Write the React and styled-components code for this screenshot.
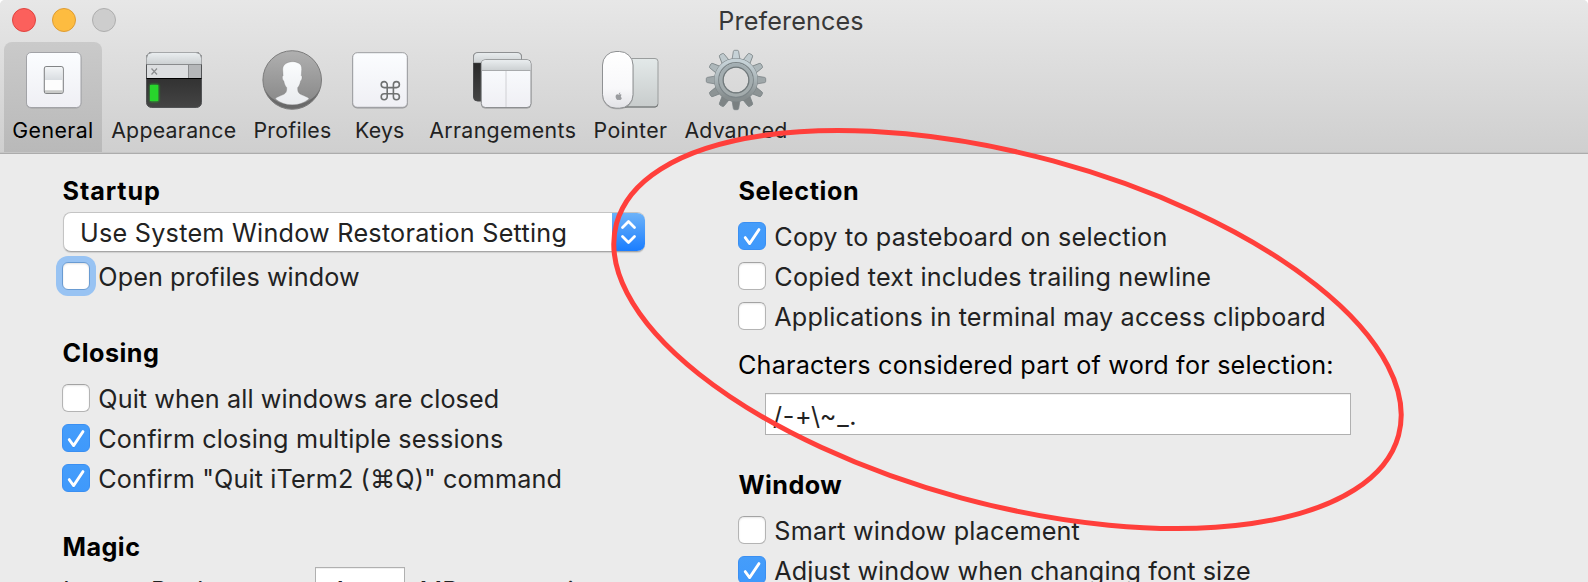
import React from 'react';
import styled, { createGlobalStyle, css } from 'styled-components';
import { FaApple } from 'react-icons/fa';

const GlobalStyle = createGlobalStyle`
  * { box-sizing: border-box; }
  body { margin: 0; background: #fff; font-family: Inter, "Liberation Sans", sans-serif; }
`;

const Window = styled.main`
  position: relative;
  display: flex;
  flex-direction: column;
  width: 1588px;
  height: 582px;
  overflow: hidden;
  background: #ebebeb;
  border-radius: 5px 5px 0 0;
  color: #222;
  font-size: 25.2px;
  line-height: 28px;
  white-space: nowrap;
`;

const Header = styled.header`
  flex: none;
  height: 154px;
  background: linear-gradient(#e7e7e7, #cfcfcf);
  border-bottom: 1px solid #acacac;
  box-shadow: inset 0 -1px #c6c6c6;
`;

const TitleBar = styled.div`
  display: grid;
  grid-template-columns: 200px 1fr 200px;
  height: 42px;
  padding: 0 6px 0 0;
`;

const Lights = styled.div`
  display: flex;
  gap: 16px;
  padding: 8px 0 0 12px;
`;

const Light = styled.span`
  width: 24px;
  height: 24px;
  border-radius: 50%;
  background: ${(p) => p.$fill};
  border: 1px solid ${(p) => p.$edge};
`;

const Title = styled.h1`
  margin: 0;
  padding-top: 7px;
  font-size: inherit;
  font-weight: 400;
  text-align: center;
  color: #383838;
  letter-spacing: 0.12px;
`;

const Toolbar = styled.nav`
  display: flex;
  height: 110px;
  padding-left: 4px;
`;

const Tab = styled.div`
  display: flex;
  flex-direction: column;
  align-items: center;
  width: ${(p) => p.$width}px;
  padding-top: 6px;
  font-size: 21.3px;
  line-height: 26px;
  letter-spacing: ${(p) => p.$track}px;
  ${(p) =>
    p.$active &&
    css`
      color: #000;
      background: linear-gradient(#cacaca, #b9b9b9);
      border-radius: 8px 8px 0 0;
    `}
  > svg {
    flex: none;
    margin-bottom: 5px;
  }
`;

const Panes = styled.div`
  display: grid;
  grid-template-columns: 676px 1fr;
  padding: 23px 0 0 62px;
`;

const Column = styled.div`
  display: flex;
  flex-direction: column;
`;

const Section = styled.section`
  display: flex;
  flex-direction: column;
  margin-bottom: ${(p) => p.$after || 0}px;
`;

const Heading = styled.h2`
  margin: 0 0 ${(p) => p.$after ?? 17}px;
  padding-left: 0.5px;
  font-size: inherit;
  font-weight: 700;
  color: #000;
  letter-spacing: ${(p) => p.$track}px;
`;

const Rows = styled.div`
  display: flex;
  flex-direction: column;
  gap: 12px;
`;

const CheckRow = styled.label`
  display: flex;
  gap: 8.3px;
  height: 28px;
  line-height: 30px;
  letter-spacing: ${(p) => p.$track}px;
`;

const Box = styled.span`
  flex: none;
  width: 28px;
  height: 28px;
  border-radius: 6px;
  ${(p) =>
    p.$on
      ? css`
          background: linear-gradient(#459dfa, #3f99fc);
          border: 1px solid #3a8ff2;
        `
      : css`
          background: #fff;
          border: 1px solid #b4b4b4;
          border-top-color: #a3a3a3;
          box-shadow: inset 0 1px 2px rgba(0, 0, 0, 0.1);
        `}
  ${(p) =>
    p.$focused &&
    css`
      border-color: #699bd2;
      box-shadow: 0 0 0 6px #98c3f3, inset 0 1px 2px rgba(0, 0, 0, 0.12);
    `}
  svg {
    display: block;
  }
`;

const Select = styled.div`
  display: flex;
  justify-content: space-between;
  width: 582px;
  height: 40px;
  margin: 0 0 10px 1px;
  padding-left: 16px;
  overflow: hidden;
  background: #fff;
  border-radius: 8px;
  border: 1px solid #c4c4c4;
  border-bottom-color: #a6a6a6;
  border-right: 0;
  box-shadow: 0 1px 1px rgba(0, 0, 0, 0.12);
  line-height: 40px;
  letter-spacing: 0.25px;
`;

const Stepper = styled.span`
  width: 33px;
  height: 40px;
  margin: -1px 0;
  background: linear-gradient(#6fb4f8, #1a7dff);
  border-bottom: 1px solid #1a6ae8;
  svg {
    display: block;
  }
`;

const FieldCaption = styled.div`
  margin: 21px 0 14px;
  color: #000;
  letter-spacing: 0.19px;
`;

const Field = styled.div`
  width: ${(p) => p.$width}px;
  height: 42px;
  margin: ${(p) => p.$margin || '0'};
  padding: ${(p) => p.$pad};
  background: #fff;
  border: 1px solid #b0b0b0;
  box-shadow: inset 0 1px #f0f0f0;
  letter-spacing: 0.65px;
`;

const InlineRow = styled.div`
  display: flex;
  padding-left: 1px;
  > span { padding-top: 10px; }
`;

const Caption = styled.span`
  width: ${(p) => p.$width}px;
  letter-spacing: 0.05px;
`;

const Marker = styled.svg`
  position: absolute;
  inset: 0;
  pointer-events: none;
`;

function Check({ children, on, focused, track }) {
  return (
    <CheckRow $track={track}>
      <Box $on={on} $focused={focused}>
        {on && (
          <svg width="26" height="26" viewBox="0 0 26 26" fill="none" strokeLinecap="round" strokeLinejoin="round">
            <path d="M6.2 15.4l4.4 6L20 7.4" stroke="#2f7fd8" strokeOpacity=".45" strokeWidth="2.6" />
            <path d="M6.2 14.6l4.4 6L20 6.6" stroke="#fff" strokeWidth="2.8" />
          </svg>
        )}
      </Box>
      <span>{children}</span>
    </CheckRow>
  );
}

const Icon = ({ children }) => (
  <svg width="64" height="64" viewBox="0 0 64 64">
    {children}
  </svg>
);

const Definitions = styled.svg`
  position: absolute;
`;

const Gradients = () => (
  <Definitions width="0" height="0">
    <defs>
      <linearGradient id="plate" x2="0" y2="1"><stop stopColor="#fbfdff" /><stop offset="1" stopColor="#efeff4" /></linearGradient>
      <linearGradient id="toggle" x2="0" y2="1"><stop stopColor="#f3f5f7" /><stop offset="1" stopColor="#d9dde1" /></linearGradient>
      <linearGradient id="bar" x2="0" y2="1"><stop stopColor="#e9edef" /><stop offset="1" stopColor="#cdd1d3" /></linearGradient>
      <linearGradient id="screen" x2="0" y2="1"><stop stopColor="#222" /><stop offset="1" stopColor="#444" /></linearGradient>
      <linearGradient id="disc" x2="0" y2="1"><stop stopColor="#b0b0b0" /><stop offset="1" stopColor="#848484" /></linearGradient>
      <linearGradient id="person" x2="0" y2="1"><stop stopColor="#fbfdfe" /><stop offset="1" stopColor="#e9ebee" /></linearGradient>
      <linearGradient id="pad" x2="0" y2="1"><stop stopColor="#e3e9e9" /><stop offset="1" stopColor="#c8cccc" /></linearGradient>
      <linearGradient id="mouse" x2="0" y2="1"><stop stopColor="#fff" /><stop offset=".65" stopColor="#f8f8fa" /><stop offset="1" stopColor="#e2e2e6" /></linearGradient>
      <linearGradient id="steel" x2="0" y2="1"><stop stopColor="#c5d1d6" /><stop offset=".5" stopColor="#a9b3b6" /><stop offset="1" stopColor="#868d8e" /></linearGradient>
      <linearGradient id="rim" x2="0" y2="1"><stop stopColor="#a3aeb2" /><stop offset="1" stopColor="#a3abac" /></linearGradient>
      <filter id="glow" x="-60%" y="-40%" width="220%" height="180%"><feGaussianBlur stdDeviation="1.3" /></filter>
    </defs>
  </Definitions>
);

const GeneralIcon = () => (
  <Icon>
    <rect x="5.3" y="5.2" width="55" height="55.3" rx="5" fill="#8a8a8c" opacity=".55" />
    <rect x="5.5" y="4.5" width="54.5" height="55" rx="4.5" fill="url(#plate)" stroke="#a2a3a7" />
    <rect x="23.3" y="18.5" width="19" height="27" rx="2.5" fill="#fdfdfd" stroke="#828486" strokeWidth="1.1" />
    <path d="M24 20.5q0-1.5 1.5-1.5h14.5q1.5 0 1.5 1.5V32H24z" fill="url(#toggle)" />
    <path d="M24 42.3H41.7v1.2q0 1.5-1.5 1.5H25.5q-1.5 0-1.5-1.5z" fill="#c9cac8" />
  </Icon>
);

const AppearanceIcon = () => (
  <Icon>
    <rect x="4.5" y="4.5" width="55" height="55" rx="5" fill="url(#screen)" stroke="#515355" />
    <path d="M5 16V10q0-5 5-5h44q5 0 5 5v6z" fill="url(#bar)" />
    <path d="M4.5 16V10q0-5.5 5.5-5.5h44q5.5 0 5.5 5.5v6" fill="none" stroke="#a5a7a9" />
    <path d="M5 17h42v13H5z" fill="#dcdee0" />
    <path d="M47 17h12v13H47z" fill="#b5b7b9" />
    <path d="M4.5 16.5h55M46.5 17v13" stroke="#898b8d" />
    <path d="M4.5 30.5h55" stroke="#000" />
    <path d="M9.5 20.5l5.5 6M15 20.5l-5.5 6" stroke="#8a8c8e" strokeWidth="1.2" />
    <rect x="8" y="36.5" width="8.5" height="17" fill="#1fc42a" filter="url(#glow)" />
    <rect x="8" y="37" width="8.2" height="16" fill="#28d52c" />
  </Icon>
);

const ProfilesIcon = () => (
  <Icon>
    <g transform="translate(-.3 0)">
      <circle cx="31.5" cy="32" r="29.3" fill="url(#disc)" stroke="#7b7b7b" />
      <path d="M4 41a29 29 0 0 0 55 0a29.5 25 0 0 1-55 0z" fill="#555" opacity=".6" />
      <path d="M31.5 13.7c3-.3 4.5.7 6 1.3 2.8.8 3.6 3.5 3.5 6.5l-.4 6.2c1.3.2.9 4.2-.7 5.3-.6 3.2-1.6 5.2-2.9 6.6-.1 3.6.3 5.4 3.5 7 3.5 1.7 5.8 2 8 4.2-5 4-10.3 6-17 6s-12-2-17-6c2.2-2.2 4.5-2.5 8-4.2 3.2-1.6 3.6-3.4 3.5-7-1.3-1.4-2.3-3.4-2.9-6.6-1.6-1.1-2-5.1-.7-5.3l-.4-6.2c-.1-4.5 3.5-7.5 9.5-7.8z" fill="url(#person)" stroke="#6f6f6f" strokeOpacity=".35" strokeWidth=".8" />
    </g>
  </Icon>
);

const KeysIcon = () => (
  <Icon>
    <rect x="4.2" y="5.2" width="55.6" height="55.3" rx="5" fill="#808083" opacity=".7" />
    <rect x="4.7" y="4.7" width="54.6" height="54.6" rx="4.5" fill="url(#plate)" stroke="#9c9da0" />
    <path
      d="M39.2 39.6v-3a3 3 0 1 0-3 3h12.2a3 3 0 1 0-3-3v12.2a3 3 0 1 0 3-3H36.2a3 3 0 1 0 3 3z"
      fill="none"
      stroke="#6f7171"
      strokeWidth="1.6"
    />
  </Icon>
);

const ArrangementsIcon = () => (
  <Icon>
    <g transform="translate(-.5 0)">
      <rect x="3" y="5" width="48" height="48" rx="4" fill="url(#screen)" stroke="#48494b" />
      <path d="M3 15V9q0-4.5 4.5-4.5h39q4.5 0 4.5 4.5v6z" fill="url(#bar)" stroke="#8e9092" />
      <path d="M3 15.5h48" stroke="#333" />
      <rect x="10.5" y="12.2" width="50.3" height="48.3" rx="4.5" fill="#77797b" opacity=".7" />
      <rect x="10.8" y="11.7" width="49.7" height="47.8" rx="4" fill="url(#plate)" stroke="#8d8f91" />
      <path d="M11.3 22V15.5q0-3.3 3.3-3.3h42q3.3 0 3.3 3.3V22z" fill="url(#bar)" />
      <path d="M11 22.5h49" stroke="#a8aaac" />
      <path d="M35.5 23v36" stroke="#d0d0d4" />
    </g>
  </Icon>
);

const PointerIcon = () => (
  <Icon>
    <g transform="translate(-.5 0)">
      <rect x="20" y="10.5" width="39.5" height="48.5" rx="3" fill="url(#pad)" stroke="#9a9d9d" />
      <path d="M24 59h32.5q2.5 0 2.5-2.5" fill="none" stroke="#6f7272" />
      <rect x="3.8" y="4" width="31" height="57.3" rx="14" fill="#666" opacity=".4" />
      <rect x="4" y="3.5" width="30.5" height="56.7" rx="13.5" fill="url(#mouse)" stroke="#8f9193" />
      <FaApple x="16" y="44" size={8.5} color="#999b9e" />
    </g>
  </Icon>
);

const TOOTH_COLORS = ['#c6d2d7', '#bfcace', '#aeb8bb', '#9fa7a9', '#8d9495', '#7f8586', '#7a8081'];

const Tooth = styled.path`
  fill: ${(p) => p.$fill};
  stroke: #7b8386;
  stroke-width: 0.8px;
`;

const AdvancedIcon = () => (
  <Icon>
    {Array.from({ length: 12 }, (_, i) => (
      <Tooth
        key={i}
        $fill={TOOTH_COLORS[Math.min(i, 12 - i)]}
        d="M28 12l1.3-8.3q.2-1.4 1.4-1.4h2.6q1.2 0 1.4 1.4L36 12z"
        transform={`rotate(${i * 30} 32 32)`}
      />
    ))}
    <circle cx="32" cy="32" r="17.2" fill="none" stroke="#798184" strokeWidth="9.6" />
    <circle cx="32" cy="32" r="17" fill="none" stroke="url(#steel)" strokeWidth="9.2" />
    <circle cx="32" cy="32" r="17.3" fill="none" stroke="#7d8689" strokeWidth="1.2" />
    <circle cx="32" cy="32" r="15" fill="none" stroke="url(#rim)" strokeWidth="3.4" />
    <circle cx="32" cy="32" r="12.9" fill="none" stroke="#70787a" strokeWidth="1.2" />
  </Icon>
);

const TABS = [
  { label: 'General', width: 98, track: 0.42, icon: <GeneralIcon />, active: true },
  { label: 'Appearance', width: 143.5, track: 0.27, icon: <AppearanceIcon /> },
  { label: 'Profiles', width: 94, track: 0.29, icon: <ProfilesIcon /> },
  { label: 'Keys', width: 80.5, track: 0.19, icon: <KeysIcon /> },
  { label: 'Arrangements', width: 165.5, track: 0.36, icon: <ArrangementsIcon /> },
  { label: 'Pointer', width: 90, track: 0.37, icon: <PointerIcon /> },
  { label: 'Advanced', width: 121, track: 0.13, icon: <AdvancedIcon /> },
];

export default function App() {
  return (
    <>
      <GlobalStyle />
      <Window>
        <Gradients />
        <Header>
          <TitleBar>
            <Lights>
              <Light $fill="#fc605c" $edge="#e0443f" />
              <Light $fill="#fdbc40" $edge="#de9c34" />
              <Light $fill="#cdcdcd" $edge="#aeaeae" />
            </Lights>
            <Title>Preferences</Title>
          </TitleBar>
          <Toolbar>
            {TABS.map((t) => (
              <Tab key={t.label} $width={t.width} $track={t.track} $active={t.active}>
                {t.icon}
                {t.label}
              </Tab>
            ))}
          </Toolbar>
        </Header>
        <Panes>
          <Column>
            <Section $after={49}>
              <Heading $track={0.9} $after={7}>Startup</Heading>
              <Select>
                Use System Window Restoration Setting
                <Stepper>
                  <svg width="33" height="40" viewBox="0 0 33 40" fill="none" stroke="#fff" strokeWidth="2.8" strokeLinecap="round" strokeLinejoin="round">
                    <path d="M10.5 15.5l6-6 6 6M10.5 24.5l6 6 6-6" />
                  </svg>
                </Stepper>
              </Select>
              <Check focused track={0.08}>Open profiles window</Check>
            </Section>
            <Section $after={41}>
              <Heading $track={0.5}>Closing</Heading>
              <Rows>
                <Check track={0.1}>Quit when all windows are closed</Check>
                <Check on track={0.15}>Confirm closing multiple sessions</Check>
                <Check on track={0.13}>Confirm "Quit iTerm2 (⌘Q)" command</Check>
              </Rows>
            </Section>
            <Section>
              <Heading $track={0.45} $after={6}>Magic</Heading>
              <InlineRow>
                <Caption $width={251.5}>Instant Replay uses</Caption>
                <Field $width={90} $margin="0 15px 0 0" $pad="9px 14px">4</Field>
                <Caption>MB per session.</Caption>
              </InlineRow>
            </Section>
          </Column>
          <Column>
            <Section $after={36}>
              <Heading $track={0.6}>Selection</Heading>
              <Rows>
                <Check on track={0.21}>Copy to pasteboard on selection</Check>
                <Check track={0.19}>Copied text includes trailing newline</Check>
                <Check track={0.15}>Applications in terminal may access clipboard</Check>
              </Rows>
              <FieldCaption>Characters considered part of word for selection:</FieldCaption>
              <Field $width={586} $margin="0 0 0 27px" $pad="8px 7px">/-+\~_.</Field>
            </Section>
            <Section>
              <Heading $track={0.45}>Window</Heading>
              <Rows>
                <Check track={0.19}>Smart window placement</Check>
                <Check on track={0.1}>Adjust window when changing font size</Check>
              </Rows>
            </Section>
          </Column>
        </Panes>
        <Marker width="1588" height="582" viewBox="0 0 1588 582" fill="none">
          <ellipse cx="1007.5" cy="329.5" rx="405.1" ry="174.6" transform="rotate(15.14 1007.5 329.5)" stroke="#ff3f3b" strokeWidth="5" />
        </Marker>
      </Window>
    </>
  );
}
